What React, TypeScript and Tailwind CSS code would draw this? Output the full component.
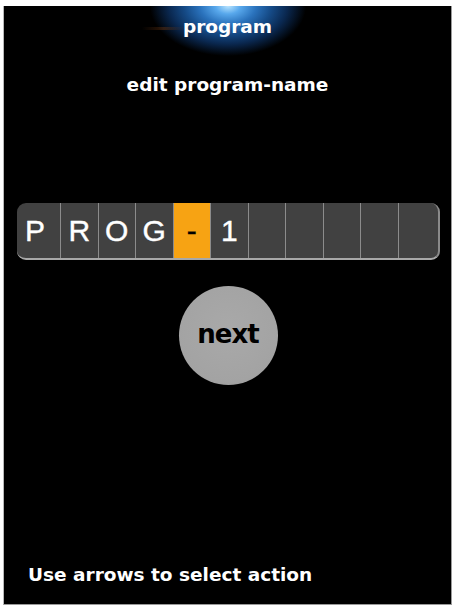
import React from "react";

const cells: { ch: string; active?: boolean }[] = [
  { ch: "P" },
  { ch: "R" },
  { ch: "O" },
  { ch: "G" },
  { ch: "-", active: true },
  { ch: "1" },
  { ch: "" },
  { ch: "" },
  { ch: "" },
  { ch: "" },
  { ch: "" },
];

export default function App() {
  return (
    <div className="w-[457px] h-[611px] bg-white pl-[3px] pt-[6px]">
      <div
        className="relative w-[449px] h-[599px] bg-black border-l border-r border-b border-l-[#b8b8b8] border-r-[#9a9a9a] border-b-[#9a9a9a] flex flex-col overflow-hidden"
        style={{ fontFamily: '"DejaVu Sans", Verdana, sans-serif' }}
      >
        <div className="absolute left-[124px] top-0 w-[200px] h-[60px] bg-[radial-gradient(78px_50px_at_50%_0%,#b8e4ff_0%,#58a8ec_16%,#2a72bc_36%,#154a86_56%,#0a2850_76%,rgba(0,0,0,0)_100%)]" />
        <div className="absolute left-[138px] top-[21px] w-[44px] h-[3px] bg-[linear-gradient(90deg,rgba(0,0,0,0),rgba(120,60,20,0.4),rgba(0,0,0,0))]" />
        <div className="relative pt-[10px] text-center text-white font-bold text-[18.5px] leading-[22px]">
          program
        </div>
        <div className="relative mt-[36px] text-center text-white font-bold text-[18.5px] leading-[22px]">
          edit program-name
        </div>
        <div className="mt-[107px] ml-[13px] w-[423px] h-[57px] rounded-[9px] bg-[#414141] border-b-2 border-r-2 border-b-[#a8a8a8] border-r-[#8a8a8a] flex overflow-hidden">
          {cells.map((c, i) => {
            const first = i === 0;
            const last = i === cells.length - 1;
            return (
              <div
                key={i}
                className={[
                  "h-full flex items-center justify-center text-[30px] leading-none [-webkit-text-stroke:0.4px_currentColor]",
                  first ? "w-[43px] pr-[7px]" : last ? "flex-1" : "w-[37.5px]",
                  !first ? "border-l border-l-[#8c8c8c]" : "",
                  c.active ? "bg-[#f7a313] text-black" : "text-white",
                ].join(" ")}
                style={{ fontFamily: '"Liberation Sans", Arial, sans-serif' }}
              >
                {c.ch}
              </div>
            );
          })}
        </div>
        <div className="mt-[26px] self-center ml-[1px] w-[99px] h-[99px] rounded-full bg-[radial-gradient(circle_at_50%_45%,#a9a9a9_0%,#a3a3a3_70%,#939393_92%,#b5b5b5_100%)] flex items-center justify-center">
          <span className="text-black font-bold text-[26px] tracking-[-1px] leading-none pb-[3px]">next</span>
        </div>
        <div className="mt-auto pb-[18px] pl-[24px] text-white font-bold text-[18.5px] leading-[22px]">
          Use arrows to select action
        </div>
      </div>
    </div>
  );
}
